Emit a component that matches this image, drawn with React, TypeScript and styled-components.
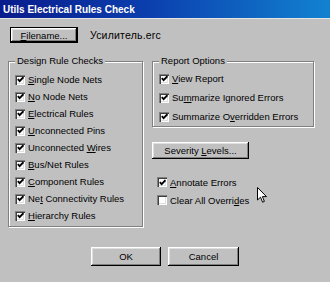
import React from 'react';
import styled, { createGlobalStyle, css } from 'styled-components';

const Global = createGlobalStyle`
  html, body { margin: 0; padding: 0; background: #c0c0c0; }
  body { font-family: "Liberation Sans", Arial, sans-serif; }
`;

const Window = styled.div`
  position: relative;
  width: 330px;
  height: 282px;
  overflow: hidden;
  background: #c0c0c0;
  font-family: "Liberation Sans", Arial, sans-serif;
  font-size: 9.5px;
  color: #000;
  display: flex;
  flex-direction: column;
`;

const TitleBar = styled.div`
  height: 18px;
  flex: none;
  background: linear-gradient(90deg, #0a1c8c 0%, #0b3fae 45%, #1282d0 100%);
  color: #fff;
  font-weight: bold;
  font-size: 10px;
  display: flex;
  align-items: center;
  padding-left: 3px;
  border-bottom: 1px solid #e4e4e4;
`;

const Body = styled.div`
  display: flex;
  flex-direction: column;
  padding: 8px 0 0 8px;
`;

const FileRow = styled.div`
  display: flex;
  align-items: center;
  gap: 12px;
  padding-left: 2px;
`;

const Button = styled.button<{ $w: number; $h: number; $default?: boolean }>`
  width: ${(p) => p.$w}px;
  height: ${(p) => p.$h}px;
  flex: none;
  margin: 0;
  padding: 0;
  background: #c0c0c0;
  font: inherit;
  color: #000;
  border: none;
  box-sizing: border-box;
  box-shadow: inset -1px -1px #000, inset 1px 1px #fff, inset -2px -2px #808080, inset 2px 2px #dfdfdf;
  ${(p) =>
    p.$default &&
    css`
      border: 1px solid #000;
    `}
`;

const FileName = styled.span`
  font-size: 10.5px;
  letter-spacing: 0.2px;
`;

const Columns = styled.div`
  display: flex;
  gap: 9px;
  margin-top: 18px;
  align-items: flex-start;
`;

const Group = styled.div<{ $w: number; $h: number; $pt: number }>`
  position: relative;
  width: ${(p) => p.$w}px;
  height: ${(p) => p.$h}px;
  box-sizing: border-box;
  border: 1px solid #808080;
  box-shadow: inset 1px 1px #fff, 1px 1px #fff;
  padding: ${(p) => p.$pt}px 0 0 6px;
  display: flex;
  flex-direction: column;
`;

const Caption = styled.span`
  position: absolute;
  top: -7px;
  left: 6px;
  padding: 0 2px;
  background: #c0c0c0;
  line-height: 12px;
`;

const RightColumn = styled.div`
  display: flex;
  flex-direction: column;
  width: 162px;
`;

const Row = styled.label<{ $h: number }>`
  height: ${(p) => p.$h}px;
  display: flex;
  align-items: center;
  gap: 3px;
  white-space: nowrap;
`;

const Box = styled.span`
  width: 10px;
  height: 10px;
  box-sizing: border-box;
  flex: none;
  background: #fff;
  box-shadow: inset 1px 1px #808080, inset 2px 2px #404040, inset -1px -1px #fff, inset -2px -2px #dfdfdf;
  display: flex;
  align-items: center;
  justify-content: center;
`;

const Key = styled.span`
  text-decoration: underline;
`;

const SeverityWrap = styled.div`
  margin-top: 15px;
`;

const ExtraList = styled.div`
  display: flex;
  flex-direction: column;
  margin-top: 14px;
  padding-left: 5px;
`;

const ButtonRow = styled.div`
  display: flex;
  justify-content: center;
  gap: 7px;
  margin-top: 20px;
  margin-left: -8px;
`;

const CursorLayer = styled.svg`
  position: absolute;
  left: 257px;
  top: 187px;
`;

type Item = { pre: string; key: string; post: string; checked?: boolean };

const Check: React.FC<{ checked?: boolean }> = ({ checked = true }) => (
  <Box>
    {checked && (
      <svg width="7" height="7" viewBox="0 0 7 7">
        <path d="M0.8 3.2 L2.6 5.2 L6.4 1.2" fill="none" stroke="#000" strokeWidth="1.8" />
      </svg>
    )}
  </Box>
);

const CheckRow: React.FC<{ item: Item; h: number }> = ({ item, h }) => (
  <Row $h={h}>
    <Check checked={item.checked !== false} />
    <span>
      {item.pre}
      <Key>{item.key}</Key>
      {item.post}
    </span>
  </Row>
);

const designItems: Item[] = [
  { pre: '', key: 'S', post: 'ingle Node Nets' },
  { pre: '', key: 'N', post: 'o Node Nets' },
  { pre: '', key: 'E', post: 'lectrical Rules' },
  { pre: '', key: 'U', post: 'nconnected Pins' },
  { pre: 'Unconnected ', key: 'W', post: 'ires' },
  { pre: '', key: 'B', post: 'us/Net Rules' },
  { pre: '', key: 'C', post: 'omponent Rules' },
  { pre: 'Ne', key: 't', post: ' Connectivity Rules' },
  { pre: '', key: 'H', post: 'ierarchy Rules' },
];

const reportItems: Item[] = [
  { pre: '', key: 'V', post: 'iew Report' },
  { pre: 'Su', key: 'm', post: 'marize Ignored Errors' },
  { pre: 'Summarize O', key: 'v', post: 'erridden Errors' },
];

const extraItems: Item[] = [
  { pre: '', key: 'A', post: 'nnotate Errors' },
  { pre: 'Clear All Overri', key: 'd', post: 'es', checked: false },
];

export default function App() {
  return (
    <Window>
      <Global />
      <TitleBar>Utils Electrical Rules Check</TitleBar>
      <Body>
        <FileRow>
          <Button $w={68} $h={16} $default>
            <Key>F</Key>ilename...
          </Button>
          <FileName>Усилитель.erc</FileName>
        </FileRow>
        <Columns>
          <Group $w={135} $h={166} $pt={9}>
            <Caption>Design Rule Checks</Caption>
            {designItems.map((it) => (
              <CheckRow key={it.pre + it.key + it.post} item={it} h={17} />
            ))}
          </Group>
          <RightColumn>
            <Group $w={162} $h={66} $pt={7}>
              <Caption>Report Options</Caption>
              {reportItems.map((it) => (
                <CheckRow key={it.pre + it.key + it.post} item={it} h={19} />
              ))}
            </Group>
            <SeverityWrap>
              <Button $w={97} $h={17}>
                Severity <Key>L</Key>evels...
              </Button>
            </SeverityWrap>
            <ExtraList>
              {extraItems.map((it) => (
                <CheckRow key={it.pre + it.key + it.post} item={it} h={18} />
              ))}
            </ExtraList>
          </RightColumn>
        </Columns>
        <ButtonRow>
          <Button $w={70} $h={19}>OK</Button>
          <Button $w={71} $h={19}>Cancel</Button>
        </ButtonRow>
      </Body>
      <CursorLayer width="11" height="17" viewBox="0 0 11 17">
        <path d="M0.5 0.5 L0.5 13 L3.5 10.2 L5.6 15.2 L7.4 14.4 L5.4 9.6 L9.5 9.6 Z" fill="#fff" stroke="#000" strokeWidth="1" />
      </CursorLayer>
    </Window>
  );
}
